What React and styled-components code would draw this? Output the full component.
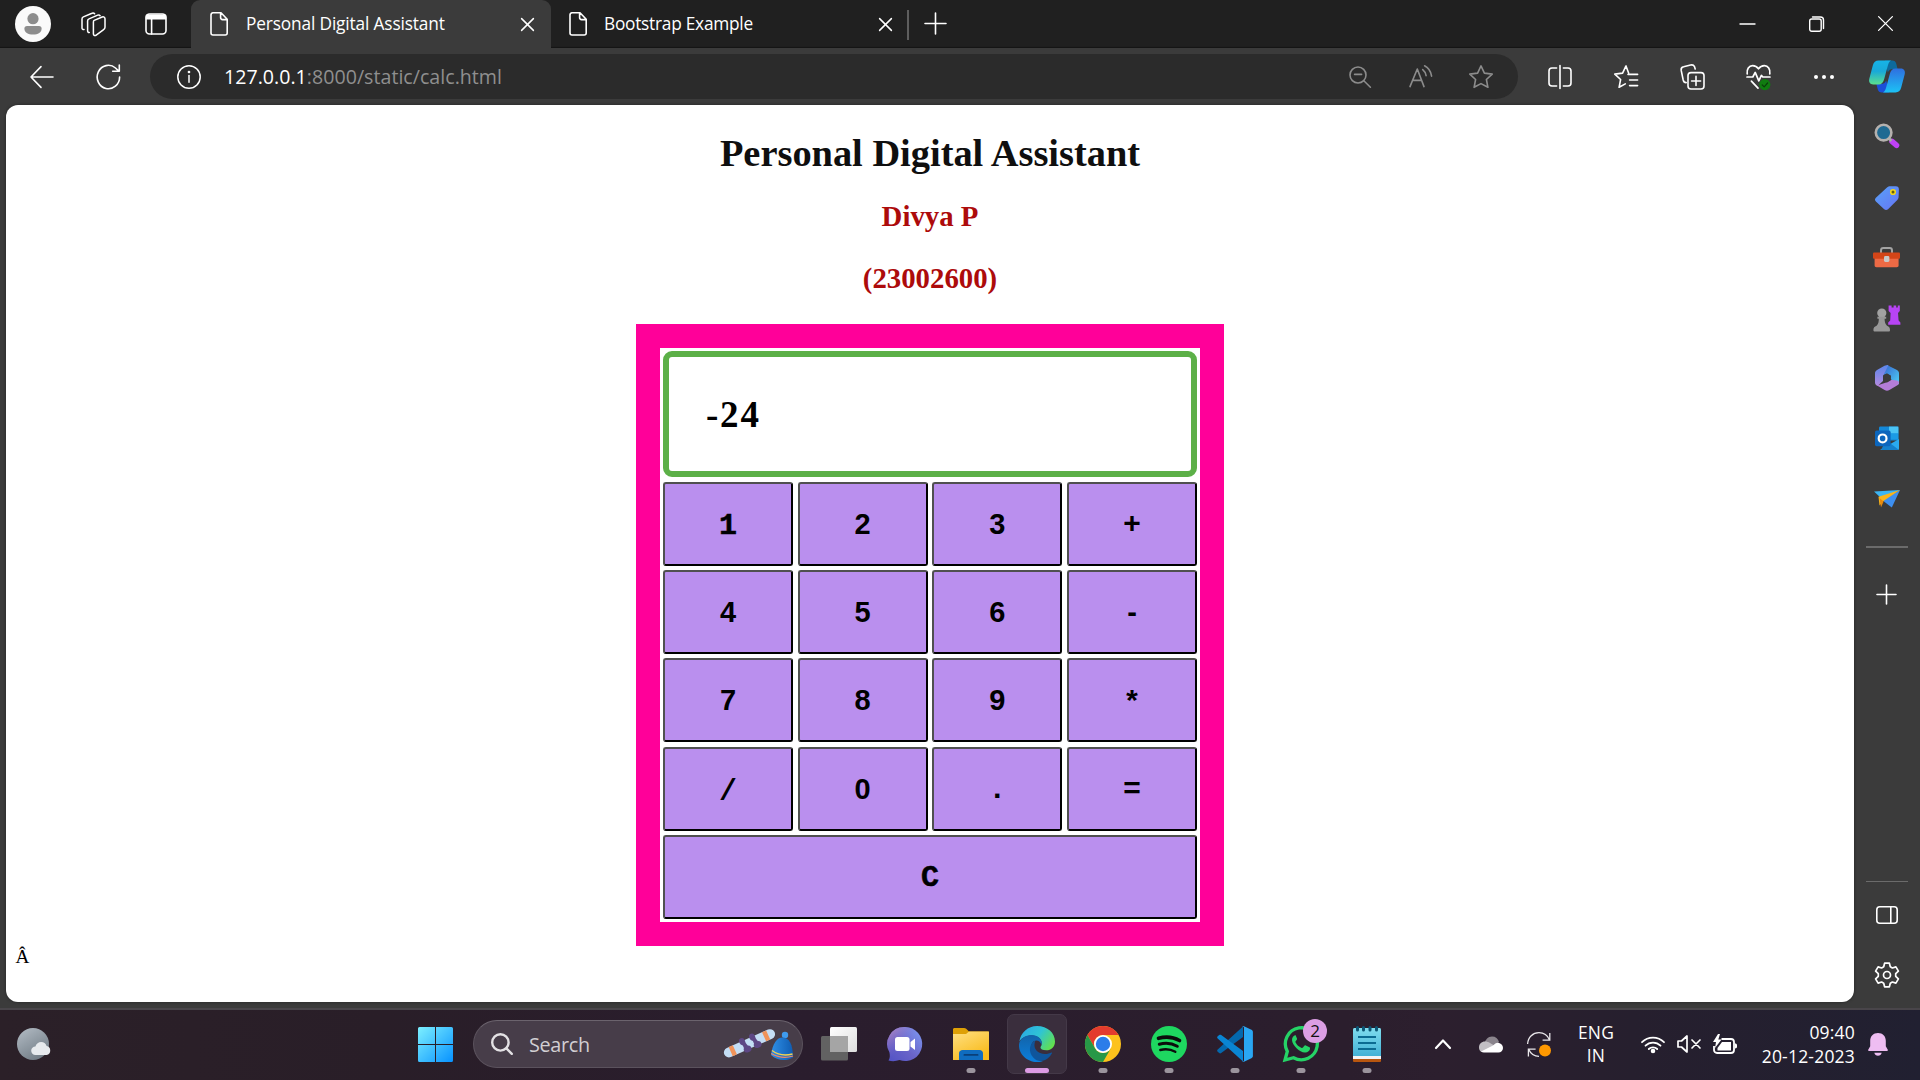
import React, { useState } from "react";
import styled, { createGlobalStyle } from "styled-components";

const UI = '"Open Sans", "Noto Sans", sans-serif';

const Global = createGlobalStyle`
  * { box-sizing: border-box; }
  html, body, #root { height: 100%; }
  body { margin: 0; overflow: hidden; background: #3b3b3b; }
  svg { display: block; flex: none; overflow: visible; }
`;

/* ---------- window ---------- */
const Screen = styled.div`
  width: 1920px; height: 1080px; display: flex; flex-direction: column;
  font-family: ${UI}; color: #fff; background: #3b3b3b; overflow: hidden;
`;
const TitleBar = styled.header`
  height: 48px; flex: none; display: flex; background: #202020;
  box-shadow: inset 0 -2px 1px -1px #151515;
`;
const Slot = styled.div`
  width: ${p => p.$w}px; height: ${p => p.$h ? p.$h + "px" : "100%"}; flex: none;
  display: flex; align-items: center; justify-content: center;
`;
const Tab = styled.div`
  width: ${p => p.$w}px; flex: none; height: 48px; display: flex; align-items: center;
  padding: 0 ${p => p.$active ? 17 : 15}px 0 ${p => p.$active ? 19 : 18}px;
  background: ${p => p.$active ? "#3b3b3b" : "transparent"};
  border-radius: 9px 9px 0 0; font-size: 17.3px;
`;
const TabTitle = styled.span`
  flex: 1; margin-left: ${p => p.$gap}px; white-space: nowrap; line-height: 24px;
  letter-spacing: ${p => p.$ls}px;
`;
const TabDivider = styled.div`width: 2px; height: 30px; margin-top: 10px; background: #5e5e5e;`;
const Grow = styled.div`flex: 1;`;

const Toolbar = styled.div`height: 57px; flex: none; display: flex; align-items: center; padding-left: 9px;`;
const AddressBar = styled.div`
  width: 1368px; height: 45px; margin-left: 9px; border-radius: 23px; background: #2b2b2b;
  display: flex; align-items: center; padding-left: 27px; padding-right: 8px; flex: none;
`;
const Url = styled.div`
  flex: 1; margin-left: 23px; font-size: 19.6px; line-height: 28px; color: #8f8f8f; letter-spacing: 0.02px;
  b { font-weight: 400; color: #fff; }
`;

const Body = styled.div`flex: 1; display: flex; min-height: 0;`;
const Page = styled.main`
  width: 1848px; height: 897px; margin-left: 6px; background: #fff; border-radius: 12px; flex: none;
  font-family: "Liberation Serif", "Times New Roman", serif; color: #000;
  display: flex; flex-direction: column; align-items: center; box-shadow: 0 0 3px #222;
`;
const Heading = styled.h1`margin: 26px 0 0; font-size: 38.4px; line-height: 44px; color: #0f0f0f;`;
const SubHeading = styled.h2`margin: ${p => p.$top}px 0 0; font-size: 28.8px; line-height: 33px; color: #ad0b0b;`;
const Calculator = styled.section`
  width: 588px; height: 622px; margin-top: 29px; flex: none; padding: 24px; background: #ff0099;
`;
const Panel = styled.div`height: 574px; padding: 3px; background: #fff; display: flex; flex-direction: column;`;
const Display = styled.output`
  height: 126px; flex: none; border: 6px solid #5cb047; border-radius: 9px; padding: 1px 0 0 37px;
  display: flex; align-items: center; font-size: 37px; font-weight: 700; letter-spacing: 1.8px;
`;
const Keys = styled.div`
  margin-top: 5px; display: grid; grid-template-columns: repeat(4, 130px); justify-content: space-between;
  grid-auto-rows: 84px; row-gap: 4.2px;
`;
const Key = styled.button`
  border: 2px solid; border-color: #505050 #000 #000 #505050; border-radius: 3px; background: #ba8fee;
  grid-column: ${p => p.$wide ? "1 / -1" : "auto"}; padding: ${p => p.$drop}px 0 0; color: #000;
  font: 700 ${p => p.$sans ? 29 : 30}px/34px ${p => p.$sans ? '"Liberation Sans", sans-serif' : '"Liberation Mono", monospace'};
  -webkit-text-stroke: ${p => p.$heavy ? 0.5 : 0}px #000;
`;
const Stray = styled.div`align-self: flex-start; margin: 0 0 0 9.6px; font-size: 19.2px; line-height: 22px;`;

const Sidebar = styled.aside`
  flex: 1; display: flex; flex-direction: column; align-items: center; padding-right: 1px;
`;
const Rule = styled.div`width: 42px; height: ${p => p.$h}px; margin: ${p => p.$m}; background: #6b6b6b; flex: none;`;

/* ---------- taskbar ---------- */
const Taskbar = styled.footer`
  height: 72px; flex: none; border-top: 2px solid #49454a; display: flex; align-items: center; padding-bottom: 2px;
  background: linear-gradient(90deg, #2b2028 0%, #291e28 20%, #2a1d2d 40%, #2b1e2d 70%, #2c1f2e 75%, #261f2e 85%, #212031 100%);
`;
const SearchBox = styled.div`
  width: 330px; height: 48px; flex: none; border-radius: 24px; background: #473d49; border: 1.5px solid #5b525d;
  border-top-color: #6b636d; display: flex; align-items: center; padding: 0 7px 0 17px; color: #d2cfd3;
  font-size: 19.8px; margin: 0 3px 0 5px;
`;
const SearchLabel = styled.span`flex: 1; margin-left: 16px; letter-spacing: -0.3px;`;
const AppButton = styled.div`
  width: 66px; height: 68px; flex: none; position: relative; display: flex; align-items: center; justify-content: center;
`;
const Tile = styled.div`
  width: 60px; height: 60px; border-radius: 7px; display: flex; align-items: center; justify-content: center;
  background: ${p => p.$on ? "#3a2e3d" : "transparent"}; border: 1.5px solid ${p => p.$on ? "#443948" : "transparent"};
`;
const Indicator = styled.i`
  position: absolute; bottom: 5px; left: 50%; transform: translateX(-50%);
  width: ${p => p.$on ? 24 : 9}px; height: 5px; border-radius: 3px; background: ${p => p.$on ? "#dc9be4" : "#9b949d"};
`;
const Badge = styled.span`
  position: absolute; left: 35px; top: 9px; width: 24px; height: 24px; border-radius: 50%; background: #dc9fe4;
  color: #111; font-size: 17px; line-height: 24px; text-align: center;
`;
const TrayText = styled.div`
  width: ${p => p.$w}px; flex: none; font-size: ${p => p.$size || 17.4}px; line-height: ${p => p.$lh || 24}px; white-space: nowrap;
  text-align: ${p => p.$align}; letter-spacing: ${p => p.$ls || 0}px;
`;

/* ---------- line icons ---------- */
const Line = ({ w = 24, h = 24, c = "#fff", s = 1.6, children }) => (
  <svg width={w} height={h} viewBox={`0 0 ${w} ${h}`} fill="none" stroke={c} strokeWidth={s}
    strokeLinecap="round" strokeLinejoin="round">{children}</svg>
);
const Cross = ({ z = 13, s = 1.5 }) => <Line w={z} h={z} s={s}><path d={`M.6 .6L${z - .6} ${z - .6}M${z - .6} .6L.6 ${z - .6}`} /></Line>;
const DocIcon = () => <Line w={18} h={24}><path d="M3 .8h8l6.2 6.4V21a2 2 0 0 1-2 2H3a2 2 0 0 1-2-2V3a2.2 2.2 0 0 1 2-2.2zM10.6 1v4.6a2 2 0 0 0 2 2H17" /></Line>;
const Plus = ({ z = 21, s = 1.6 }) => <Line w={z} h={z} s={s}><path d={`M${z / 2} 0V${z}M0 ${z / 2}H${z}`} /></Line>;
const StarPath = "M12 .9l3.4 7.2 7.8 1-5.8 5.4 1.5 7.8L12 18.6 5.1 22.3l1.5-7.8L.8 9.1l7.8-1z";

const ProfileIcon = () => (
  <svg width="36" height="36" viewBox="0 0 36 36"><circle cx="18" cy="18" r="18" fill="#fafafa" />
    <circle cx="18" cy="12.7" r="5.6" fill="#8d8d8d" /><path d="M12 20h12a2.6 2.6 0 0 1 2.6 2.6c0 4-3.6 6-8.6 6s-8.6-2-8.6-6A2.6 2.6 0 0 1 12 20z" fill="#8d8d8d" /></svg>
);
const Workspaces = () => (
  <Line w={25} h={25} s={1.5}>
    <path d="M13.2 8.4l8-3.4c1.4-.6 2.8.2 2.8 1.7v8.5c0 1.2-.6 2-1.7 2.7l-7.1 5.3c-1.2.9-2.8.2-2.8-1.3V10c0-.8.2-1.3.8-1.6z" />
    <path d="M8.3 20.4c-1 .2-1.7-.5-1.7-1.6V9c0-1 .4-1.7 1.4-2.1l8.7-3.8c1.1-.4 1.9-.1 2.4.6M3 17.6c-1.2.1-2-.6-2-1.7V7c0-1 .5-1.7 1.4-2.1L11 1.3c1.1-.5 2.1-.2 2.6.5" />
  </Line>
);
const TabActions = () => (
  <Line w={22} h={22}><rect x="1" y="1" width="20" height="20" rx="3.5" /><path d="M1.5 2.2h19v3.6h-19z" fill="#fff" /><path d="M6.6 6v15" /></Line>
);
const Back = () => <Line><path d="M23 12H1M11 1.6L1 12l10 10.4" /></Line>;
const Refresh = () => <Line w={25} h={26}><path d="M23.6 13A11.2 11.7 0 1 1 19.5 4l3 2.8M23.3 1v6.3h-6.6" /></Line>;
const Info = () => <Line s={1.5}><circle cx="12" cy="12" r="11.2" /><path d="M12 10.6v6.6" /><circle cx="12" cy="7" r=".6" fill="#fff" /></Line>;
const ZoomOut = () => <Line w={22} h={22} c="#8c8c8c"><circle cx="9" cy="9" r="8" /><path d="M5.6 8.4h7M14.8 14.8l6.6 6.4" /></Line>;
const ReadAloud = () => <Line c="#8c8c8c"><path d="M1 21.6L8.3 4l6.7 17.6M3.6 15.4h9M13.7 4.6c2 1.6 3 3.4 3.4 6M15.6.8c3.8 2 6.4 6 7 10.4" /></Line>;
const Star = () => <Line c="#8c8c8c"><path d={StarPath} /></Line>;
const Split = () => <Line><path d="M12 .5v23M8.6 3H4a3 3 0 0 0-3 3v12a3 3 0 0 0 3 3h4.6M15.4 3H20a3 3 0 0 1 3 3v12a3 3 0 0 1-3 3h-4.6" /></Line>;
const Favorites = () => <Line><path d="M14.6 8.1L12 .9 8.6 8.1l-7.8 1 5.8 5.4-1.5 7.8 6.2-3.4M14 9.4h9.6M15.6 15h8M15.6 20.6h8" /></Line>;
const Collections = () => (
  <Line w={25} h={26}><rect x="8" y="8.6" width="16" height="16.4" rx="3" /><path d="M16 12.4v9M11.6 17h9M6.2 18.6C4 18.7 3.6 17.6 3.2 16L1.2 6.4C.8 4.2 1.8 3.2 3.6 2.8l7-1.8c2-.5 3.2.2 3.9 1.6l.7 2.4" /></Line>
);
const Health = () => (
  <svg width="25" height="26" viewBox="0 0 25 26" fill="none" stroke="#fff" strokeWidth="1.7" strokeLinecap="round" strokeLinejoin="round">
    <path d="M1.2 9.8C.5 5.4 3 1.6 6.6 1.6c2.4 0 4.4 1 5.9 3.2C14 2.6 16 1.6 18.4 1.6c3.6 0 6.1 3.8 5.4 8.2M1 13h5.8l2.4-4.6 3.6 8.4 2.6-5.4 1.4 1.6H24M5.4 17.2l6.6 7" />
    <circle cx="18.8" cy="20.6" r="5.6" fill="#107c10" stroke="none" /><path d="M16.2 20.8l2 2 3.4-3.8" stroke="#0a3d0a" strokeWidth="1.2" />
  </svg>
);
const Dots = () => <svg width="20" height="4" viewBox="0 0 20 4" fill="#fff"><circle cx="2" cy="2" r="2" /><circle cx="10" cy="2" r="2" /><circle cx="18" cy="2" r="2" /></svg>;
const Copilot = () => (
  <svg width="36" height="33" viewBox="0 0 36 33">
    <defs>
      <linearGradient id="cpA" x1="0" y1="0" x2="0" y2="1"><stop offset="0" stopColor="#16b4e8" /><stop offset=".45" stopColor="#19a9d8" /><stop offset="1" stopColor="#5ce08d" /></linearGradient>
      <linearGradient id="cpB" x1="0" y1="0" x2="0" y2="1"><stop offset="0" stopColor="#2f6fe0" /><stop offset="1" stopColor="#1cc2f5" /></linearGradient>
    </defs>
    <path d="M16 .5h7c2.500 0 3.600 1.200 4.200 3L28.600 9h-4c-3 0-5 1-5.800 3.500z" fill="#0d6a9c" />
    <path d="M20 32.500h-7c-2.500 0-3.600-1.200-4.200-3L7.400 24h4c3 0 5-1 5.800-3.500z" fill="#1b50d8" />
    <path d="M9.500.5H22c-2 1-2.600 3-3.400 6l-3.400 12.500c-.9 3.500-2.500 5.500-5.800 5.500H4.200C1 24.500-.5 22 .3 18.800L3.800 5.400C4.700 2 6.500.5 9.500.5z" fill="url(#cpA)" />
    <path d="M26.500 32.500H14c2-1 2.600-3 3.400-6L20.800 14c.9-3.500 2.500-5.500 5.800-5.500h5.200c3.200 0 4.700 2.500 3.900 5.700l-3.500 13.400c-.9 3.400-2.700 4.900-5.700 4.900z" fill="url(#cpB)" />
  </svg>
);

/* ---------- sidebar icons ---------- */
const SideSearch = () => (
  <svg width="26" height="26" viewBox="0 0 26 26"><path d="M18 18.4l4.600 4" stroke="#bf42f5" strokeWidth="5.4" strokeLinecap="round" /><path d="M14.4 15l3 2.8" stroke="#a9a9a9" strokeWidth="3" />
    <circle cx="9.6" cy="9.6" r="7.8" fill="#1f6a92" stroke="#b5b1ae" strokeWidth="2.6" /></svg>
);
const Tag = () => (
  <svg width="24" height="24" viewBox="0 0 24 24"><defs><linearGradient id="tg" x1="0" y1="0" x2="1" y2="1"><stop offset="0" stopColor="#58a2f8" /><stop offset="1" stopColor="#6674f4" /></linearGradient></defs>
    <path d="M15.5.3h5.200c2.200 0 3.300 1.200 3.200 3.300l-.3 7.200c0 1.400-.5 2.300-1.300 3.100L13 23.200c-1.200 1.100-2.600 1.100-3.800 0L.9 15.400c-1.200-1.200-1.200-2.500 0-3.700L12 1.500C13 .6 14 .3 15.500.3z" fill="url(#tg)" /><circle cx="18" cy="6" r="2.3" fill="#66600a" stroke="#f2d51b" strokeWidth="1.6" /></svg>
);
const Briefcase = () => (
  <svg width="27" height="21" viewBox="0 0 27 21"><path d="M8 6V3.4C8 2 9 1 10.4 1h6.4C18 1 19 2 19 3.400V6" fill="none" stroke="#a3a3a3" strokeWidth="2" />
    <path d="M1.6 9h24v9.6c0 1-.8 1.6-1.8 1.6H3.4c-1 0-1.8-.6-1.8-1.6z" fill="#ed6a45" /><rect y="5.4" width="27" height="6.4" rx="1" fill="#d34518" /><rect x="11" y="9" width="5.4" height="6" rx="1.4" fill="#c9c9c9" /></svg>
);
const Chess = () => (
  <svg width="27" height="27" viewBox="0 0 27 27">
    <path d="M15.6.4h3v2h2v-2h2.6v2h1.600v-2h2V6l-1.800 2 .6 7.600 1.800 2v2.200H15.200v-2.200l2-2 .4-7.600-2-2z" fill="#b744f4" />
    <circle cx="8.8" cy="8" r="4.6" fill="#a2a2a2" /><path d="M4.4 11.8h8.800v2h-1.600c0 3 .6 5 2.400 7 2 .8 3 2 3 4.200 0 1-.4 1.600-1.400 1.600H2c-1 0-1.600-.6-1.600-1.600 0-2.200 1-3.400 3.200-4.200 1.800-2 2.200-4 2.200-7H4.400z" fill="#989898" /></svg>
);
const M365 = () => (
  <svg width="24" height="26" viewBox="0 0 24 26">
    <defs><linearGradient id="mb" x1="0" y1="0" x2="1" y2="1"><stop offset="0" stopColor="#3563cf" /><stop offset="1" stopColor="#4fd0f5" /></linearGradient>
      <linearGradient id="ml" x1="0" y1="0" x2="0" y2="1"><stop offset="0" stopColor="#5b86ea" /><stop offset="1" stopColor="#b48be0" /></linearGradient></defs>
    <path d="M12 0L22 5.1c1.300.8 2 1.900 2 3.300v11L15.500 14l.3-3.200L12 8.600 8 10z" fill="url(#mb)" />
    <path d="M13.500 0L8.800 9.500 8 11v5l-5.500 5C.8 20 0 19 0 17.400V8.400C0 7 .7 5.900 2 5.100L9.500.8C10.800.1 12 0 13.500 0z" fill="url(#ml)" />
    <path d="M24 17.400c0 1.400-.7 2.400-2 3.200l-7.600 4.500c-1.600.9-3.200.9-4.800 0L2 20.600l10-3.400 3.800-2.400L22 15.500c1.300.3 2 .9 2 1.900z" fill="#b47dd8" />
    <path d="M12 8.600l3.900 2.200v4.400L12 17.400l-3.900-2.200v-4.400z" fill="#3b3b3b" /></svg>
);
const Outlook = () => (
  <svg width="24" height="24" viewBox="0 0 24 24"><rect x="4" y=".6" width="19.4" height="14" rx="1.4" fill="#1488d8" /><rect x="14" y=".6" width="9.4" height="7" fill="#4bc4f5" /><rect x="14" y="7.4" width="9.4" height="6" fill="#1b9be6" />
    <path d="M5 24l19-11v9.4c0 1-.6 1.6-1.6 1.6z" fill="#2aaaf0" /><path d="M11 14l13 10H6z" fill="#1480cc" /><rect y="4.6" width="15.6" height="15.6" rx="1.6" fill="#0c66bd" /><circle cx="7.6" cy="12.4" r="3.9" fill="none" stroke="#fff" strokeWidth="2.2" /></svg>
);
const Send = () => (
  <svg width="26" height="18" viewBox="0 0 26 18"><path d="M0 1.4L26 0 8 9z" fill="#3cb5f4" /><path d="M26 0l-8.2 17.600L8 10z" fill="#3d8ff0" /><path d="M26 0L4.500 6.800l1 8.800L9.400 11z" fill="#fab41a" /><path d="M5.500 8l1.500 9.400 2.600-5.800" fill="#e8890c" /></svg>
);
const PanelIcon = () => <Line w={22} h={18} s={1.6}><rect x=".8" y=".8" width="20.4" height="16.4" rx="3" /><path d="M14.8 1v16" /></Line>;
const Gear = () => (
  <Line w={24} h={26} s={1.7}><circle cx="12" cy="13" r="3.5" />
    <path d="M9.6 1.2h4.800l.9 3.600 2.100 1.200 3.500-1.100 2.500 4.200-2.700 2.600v2.600l2.700 2.600-2.500 4.200-3.500-1.100-2.100 1.200-.9 3.600H9.600l-.9-3.600L6.600 20l-3.500 1.100-2.500-4.200 2.700-2.600v-2.600L.6 9.100l2.500-4.200L6.600 6l2.100-1.200z" /></Line>
);

/* ---------- taskbar icons ---------- */
const Weather = () => (
  <svg width="34" height="32" viewBox="0 0 34 32"><defs><linearGradient id="mn" x1="0" y1="0" x2=".6" y2="1"><stop offset="0" stopColor="#b4bdc6" /><stop offset="1" stopColor="#737e87" /></linearGradient></defs>
    <circle cx="16" cy="16" r="16" fill="url(#mn)" /><path d="M18.4 27a4.2 4.2 0 0 1 0-8.4c1-3 3-4.6 5.800-4.600 2.600 0 4.600 1.600 5.400 4A4.600 4.600 0 0 1 29.600 27z" fill="#e7eaed" /></svg>
);
const StartIcon = () => (
  <svg width="35" height="35" viewBox="0 0 35 35"><defs><linearGradient id="wn" gradientUnits="userSpaceOnUse" x1="0" y1="0" x2="35" y2="35"><stop offset="0" stopColor="#7df0ff" /><stop offset="1" stopColor="#0792ff" /></linearGradient></defs>
    <path fill="url(#wn)" d="M1.500 0H17v17H0V1.500A1.500 1.500 0 0 1 1.500 0zM18 0h15.500A1.500 1.500 0 0 1 35 1.500V17H18zM0 18h17v17H1.500A1.500 1.500 0 0 1 0 33.500zM18 18h17v15.500a1.500 1.500 0 0 1-1.500 1.500H18z" /></svg>
);
const Magnifier = () => <Line w={22} h={22} c="#e3e1e4" s={2.4}><circle cx="9.4" cy="9.4" r="8.2" /><path d="M15.4 15.4l5.400 5.400" /></Line>;
const WinterArt = () => (
  <svg width="72" height="34" viewBox="0 0 72 34">
    <defs><linearGradient id="ht" x1="0" y1="0" x2="1" y2="0"><stop offset="0" stopColor="#2f8fe6" /><stop offset="1" stopColor="#0f5cb2" /></linearGradient></defs>
    <g transform="rotate(-24 26 16.5)">
      <rect x="-1" y="11.500" width="55" height="10" rx="5" fill="#c4def5" />
      <path d="M6 11.500h4.500v10H6zM42.500 11.500H47v10h-4.500z" fill="#f0935a" />
      <g fill="#5d4785"><ellipse cx="20.500" cy="12" rx="3" ry="3.600" /><ellipse cx="22.500" cy="21" rx="4" ry="3.200" /><path d="M19.500 12h3l2 8h-5z" />
        <ellipse cx="31.500" cy="12" rx="3" ry="3.600" /><ellipse cx="33.500" cy="21" rx="4" ry="3.200" /><path d="M30.500 12h3l2 8h-5z" /></g>
    </g>
    <circle cx="62" cy="8" r="3.200" fill="#3f9bee" /><path d="M48 28c1.500-11.500 6-17.500 11.500-17.500C66 10.500 70 17 70 30.500c-6 4-16 3.500-22-2.500z" fill="url(#ht)" />
    <path d="M49 23.500c6 4.500 13 5.500 20.500 3.500" fill="none" stroke="#f6d24e" strokeWidth="1.3" /><path d="M48.300 26.500c7 4 14 5 21.700 2.500" fill="none" stroke="#f08a6a" strokeWidth="1.3" />
  </svg>
);
const TaskView = () => (
  <svg width="36" height="34" viewBox="0 0 36 34"><defs><linearGradient id="tv" x1="0" y1="0" x2="1" y2="1"><stop offset="0" stopColor="#fff" /><stop offset="1" stopColor="#dedede" /></linearGradient></defs>
    <rect y="9" width="27" height="24.500" rx="1.500" fill="#626262" /><rect x="9" width="27" height="25" rx="1.500" fill="url(#tv)" /><path d="M9 9h18v16H9z" fill="#a5a5a5" /></svg>
);
const Chat = () => (
  <svg width="34" height="34" viewBox="0 0 34 34"><defs><linearGradient id="ct" x1="0" y1="1" x2="1" y2="0"><stop offset="0" stopColor="#5152c4" /><stop offset=".45" stopColor="#6a64c9" /><stop offset="1" stopColor="#7e9df5" /></linearGradient>
    <linearGradient id="ct2" x1="0" y1="0" x2="1" y2="1"><stop offset="0" stopColor="#c48fc0" /><stop offset=".5" stopColor="#7767c6" stopOpacity="0" /></linearGradient></defs>
    <path d="M17 0a17 17 0 1 1-5.500 33C8 34.300 4 34.500.500 33.500c1.700-3 1.500-4.500 1-8A17 17 0 0 1 17 0z" fill="url(#ct)" /><path d="M17 0a17 17 0 1 1-5.500 33C8 34.300 4 34.500.500 33.500c1.700-3 1.500-4.500 1-8A17 17 0 0 1 17 0z" fill="url(#ct2)" />
    <rect x="7" y="10" width="14.500" height="14" rx="2.500" fill="#fff" /><path d="M22.500 15l4.500-3.500V23l-4.500-3.500z" fill="#fff" /></svg>
);
const Folder = () => (
  <svg width="36" height="33" viewBox="0 0 36 33"><defs><linearGradient id="fd" x1="0" y1="0" x2=".6" y2="1"><stop offset="0" stopColor="#ffe083" /><stop offset="1" stopColor="#f9bb1b" /></linearGradient></defs>
    <path d="M0 1.500C0 .6.600 0 1.500 0H11c1 0 1.600.2 2.200.8L16 3.500h18.500c.9 0 1.500.6 1.500 1.500v4H0z" fill="#dea006" /><path d="M0 6h13l3-2.500h20V32H0z" fill="url(#fd)" />
    <path d="M6 32v-6.500C6 23.500 7.500 22 9.500 22h17c2 0 3.500 1.500 3.500 3.500V32z" fill="#0f6cbf" /><rect x="10.500" y="26" width="15" height="1.800" rx=".9" fill="#0a3f78" /></svg>
);
const Edge = () => (
  <svg width="36" height="36" viewBox="0 0 36 36"><defs>
    <linearGradient id="eg" x1="0" y1=".2" x2="1" y2=".7"><stop offset="0" stopColor="#2aa8e6" /><stop offset=".5" stopColor="#2fc4d4" /><stop offset="1" stopColor="#63e04b" /></linearGradient>
    <linearGradient id="eb" x1="0" y1="0" x2="0" y2="1"><stop offset="0" stopColor="#1263a9" /><stop offset="1" stopColor="#0b7fdc" /></linearGradient></defs>
    <path d="M.4 15.500C1.600 6.500 9 0 18 0c10.500 0 18 7 18 15.500 0 5.500-4 8.800-8.600 8.800-4 0-5.900-1.300-5.900-2.700 0-1 1.300-1.700 1.300-4.300C22.800 13.500 19 9.500 13 9.500 7 9.500 2.500 12 .4 15.500z" fill="url(#eg)" />
    <path d="M0 18.500C.6 13 6 9 12.500 9c6.400 0 10.300 4 10.300 8 0 .6 0 1.200-.2 1.800-1-2.800-3-4.300-5.200-4.300-3 0-5.400 2.800-5.400 7 0 7 6 13.500 12 13.600C21 36.300 19.500 36 18 36 8 36-.5 28 0 18.500z" fill="url(#eb)" />
    <path d="M16.500 14.500c-6.500 3-7.500 11.500-2 17.200 5 5.300 13.200 4 18.200-4 .6-.8.200-1.400-.7-1-8.500 3.800-16.500-1-16.500-7.200 0-2 .400-3.700 1-5z" fill="#0f559c" /></svg>
);
const Chrome = () => (
  <svg width="36" height="36" viewBox="0 0 36 36"><circle cx="18" cy="18" r="18" fill="#fdc21c" />
    <path d="M2.400 9A18 18 0 0 1 33.600 9H18a9 9 0 0 0-7.800 13.500z" fill="#e33b2e" /><path d="M2.400 9a18 18 0 0 0 15.600 27l7.800-13.500a9 9 0 0 1-15.600 0z" fill="#279847" />
    <circle cx="18" cy="18" r="9" fill="#fff" /><circle cx="18" cy="18" r="7.200" fill="#2b7de9" /></svg>
);
const Spotify = () => (
  <svg width="36" height="36" viewBox="0 0 36 36"><circle cx="18" cy="18" r="18" fill="#1ed760" /><g fill="none" stroke="#0c0c0c" strokeLinecap="round">
    <path d="M7.500 12.300c7-2 15-1.200 21 2.200" strokeWidth="3.600" /><path d="M8.300 18.300c6-1.700 12.700-1 18 2" strokeWidth="3" /><path d="M9.300 24c5-1.400 10.500-.8 15 1.800" strokeWidth="2.400" /></g></svg>
);
const VSCode = () => (
  <svg width="36" height="36" viewBox="0 0 36 36"><path d="M.7 23.500L26 .500V11L4.200 27c-.7.500-1.500.5-2 0L.7 25.700c-.7-.6-.7-1.600 0-2.200z" fill="#0468ad" />
    <path d="M.7 12.500L26 35.500V25L4.200 9c-.7-.5-1.500-.5-2 0L.7 10.300c-.7.6-.7 1.600 0 2.200z" fill="#0a85d3" /><path d="M27 35.800c-.8.300-1.700.1-2.300-.5.800.7 2.300.2 2.300-1V1.700C27 .500 25.500 0 24.700.700c.600-.6 1.500-.8 2.300-.5l7.400 3.600c.9.400 1.500 1.200 1.500 2.200v24c0 1-.6 1.800-1.500 2.200z" fill="#2aa7f3" /></svg>
);
const WhatsApp = () => (
  <svg width="36" height="36" viewBox="0 0 36 36"><path d="M2 34l2.300-8.600A16 16 0 1 1 10.500 31.700z" fill="none" stroke="#25d366" strokeWidth="3.3" />
    <path d="M11.800 9.500c-.8 0-3 1.600-2.800 4.700.3 5 8.200 12.800 13.200 12.300 2.700-.3 4.600-1.700 4.800-3.800.1-.9-.2-1.200-1-1.600l-3.200-1.600c-.8-.3-1.200-.1-1.600.4l-1.300 1.700c-.4.500-.8.500-1.300.3-3-1.500-4.600-3-6-5.500-.3-.5-.2-.9.200-1.300l1-1.300c.3-.4.300-.8.200-1.200l-1.300-3c-.3-.6-.6-.7-.9-.1z" fill="#25d366" /></svg>
);
const Notepad = () => (
  <svg width="28" height="36" viewBox="0 0 28 36"><rect y="30" width="28" height="6" rx="1" fill="#b8560f" /><rect y="28" width="28" height="5" fill="#f2f4f5" /><defs><linearGradient id="np" x1="0" y1="0" x2="0" y2="1"><stop offset="0" stopColor="#7fdcee" /><stop offset="1" stopColor="#43b2d6" /></linearGradient></defs>
    <path d="M0 3.500C0 2.600.600 2 1.500 2h25c.9 0 1.500.6 1.500 1.500V30H0z" fill="url(#np)" /><path d="M4.500 1.500v2.500M10.500 1.500v2.500M17 1.500v2.500M23.500 1.500v2.500" stroke="#0b5675" strokeWidth="3" strokeLinecap="round" />
    <path d="M5 11h18M5 17h18M5 23h18" stroke="#0b6b92" strokeWidth="2" /></svg>
);
const Chevron = () => <Line w={16} h={10} s={2.2}><path d="M1 9l7-7.500L15 9" /></Line>;
const OneDrive = () => (
  <svg width="24" height="17" viewBox="0 0 24 17"><path d="M5 9C6 3.500 9 .5 13 .5c3.600 0 6 2 7 5.500l-6 4z" fill="#8a848c" /><path d="M0 11.500C0 8 2.500 5.500 6 5.500c2 0 3.500.5 5 1.500l5 3-13.500 6C1 15.200 0 13.500 0 11.500z" fill="#c2bfc4" /><path d="M2 15.500L14 9.500c2-2 4-3.300 6-2.500 2.400.6 4 2.400 4 5 0 2.700-2 4.500-4.600 4.500H5c-1.200 0-2.200-.3-3-1z" fill="#fff" /></svg>
);
const Sync = () => (
  <svg width="24" height="25" viewBox="0 0 24 25" fill="none" stroke="#e9e7ea" strokeWidth="1.3"><path d="M.6 12C1 5 6 .7 12 .7c5 0 8.500 2.500 10.600 7.300M22.800 1v7.200h-7.200M1.400 24.500v-7.300h7.200M1.800 17.500c2 4.500 5.500 6.800 10.200 6.800" /><circle cx="18" cy="18.500" r="6" fill="#ff9800" stroke="none" /></svg>
);
const Wifi = () => <Line w={24} h={18} s={1.8}><path d="M1 7.200a15.500 15.500 0 0 1 22 0M4.500 10.700a10.600 10.600 0 0 1 15 0M7.800 14a6 6 0 0 1 8.400 0" /><circle cx="12" cy="16" r="1.4" fill="#fff" /></Line>;
const Mute = () => <Line w={24} h={18} s={1.7}><path d="M1 6h3.500L10 1v16l-5.500-5H1zM15 5l8 8M23 5l-8 8" /></Line>;
const Battery = () => (
  <svg width="24" height="21" viewBox="0 0 24 21"><path d="M8.500 5H18a3 3 0 0 1 3 3v8a3 3 0 0 1-3 3H4a3 3 0 0 1-3-3v-4" fill="none" stroke="#fff" strokeWidth="1.8" /><path d="M9 8h9v8.500H4.500V14z" fill="#fff" /><path d="M22 9.500c1.300 0 2 .6 2 1.700v1.600c0 1-.7 1.700-2 1.700zM5 0L0 8h3l-1 6 6.500-8.500H5.300L7 0z" fill="#fff" /></svg>
);
const Bell = () => (
  <svg width="20" height="23" viewBox="0 0 20 23" fill="#eebdf2"><path d="M10 0c4.700 0 7.800 3.300 7.800 7.800v5.400l2 3.600c.3.600 0 1.200-.8 1.200H1c-.8 0-1.100-.6-.8-1.200l2-3.600V7.800C2.200 3.300 5.300 0 10 0zM6.300 19.800h7.400c-.4 1.800-1.900 3-3.700 3s-3.300-1.200-3.700-3z" /></svg>
);

const KEYS = ["1", "2", "3", "+", "4", "5", "6", "-", "7", "8", "9", "*", "/", "0", ".", "=", "C"];
const DROP = { "*": 8, "/": 6, "1": 3, "C": 3 };
const isSans = k => "234567890-".includes(k);
const SIDE = [SideSearch, Tag, Briefcase, Chess, M365, Outlook, Send];
const APPS = [
  { I: TaskView, idle: true }, { I: Chat, idle: true }, { I: Folder }, { I: Edge, on: true }, { I: Chrome },
  { I: Spotify }, { I: VSCode }, { I: WhatsApp, badge: "2" }, { I: Notepad },
];

export default function App() {
  const [value, setValue] = useState("-24");
  const press = k => {
    if (k === "C") return setValue("");
    if (k !== "=") return setValue(v => v + k);
    const m = value.match(/^(-?[\d.]+)([-+*/])(-?[\d.]+)$/);
    if (!m) return;
    const a = +m[1], b = +m[3];
    setValue(String({ "+": a + b, "-": a - b, "*": a * b, "/": a / b }[m[2]]));
  };
  return (
    <Screen>
      <Global />
      <TitleBar>
        <Slot $w={66}><ProfileIcon /></Slot>
        <Slot $w={54}><Workspaces /></Slot>
        <Slot $w={71}><TabActions /></Slot>
        <Tab $w={360} $active><DocIcon /><TabTitle $gap={18} $ls={-0.15}>Personal Digital Assistant</TabTitle><Cross /></Tab>
        <Tab $w={356}><DocIcon /><TabTitle $gap={17} $ls={-0.25}>Bootstrap Example</TabTitle><Cross /></Tab>
        <TabDivider />
        <Slot $w={52} $h={47}><Plus /></Slot>
        <Grow />
        <Slot $w={68} $h={47}><Line w={15} h={2} s={1.4}><path d="M0 1h15" /></Line></Slot>
        <Slot $w={70} $h={47}><Line w={15} h={16} s={1.4}><rect x=".7" y="3" width="11.5" height="12.3" rx="2" /><path d="M3.500 1h8a3 3 0 0 1 3 3v8.500" /></Line></Slot>
        <Slot $w={69} $h={47}><Cross z={15} s={1.3} /></Slot>
      </TitleBar>
      <Toolbar>
        <Slot $w={66}><Back /></Slot>
        <Slot $w={66}><Refresh /></Slot>
        <AddressBar>
          <Info />
          <Url><b>127.0.0.1</b>:8000/static/calc.html</Url>
          <Slot $w={60}><ZoomOut /></Slot><Slot $w={61}><ReadAloud /></Slot><Slot $w={59}><Star /></Slot>
        </AddressBar>
        <Grow />
        <Slot $w={66}><Split /></Slot><Slot $w={67}><Favorites /></Slot><Slot $w={66}><Collections /></Slot>
        <Slot $w={66}><Health /></Slot><Slot $w={64}><Dots /></Slot><Slot $w={62}><Copilot /></Slot><Slot $w={2.5} />
      </Toolbar>
      <Body>
        <Page>
          <Heading>Personal Digital Assistant</Heading>
          <SubHeading $top={25}>Divya P</SubHeading>
          <SubHeading $top={29}>(23002600)</SubHeading>
          <Calculator>
            <Panel>
              <Display>{value}</Display>
              <Keys>
                {KEYS.map(k => (
                  <Key key={k} $wide={k === "C"} $sans={isSans(k)} $heavy={k === "1" || k === "C"}
                    $drop={DROP[k] ?? (isSans(k) ? 0 : 2)} onClick={() => press(k)}>{k}</Key>
                ))}
              </Keys>
            </Panel>
          </Calculator>
          <Stray>Â</Stray>
        </Page>
        <Sidebar>
          {SIDE.map((I, i) => <Slot key={i} $w={64} $h={i ? 60.2 : 62.6}><I /></Slot>)}
          <Rule $h={2} $m="17px 0" />
          <Slot $w={64} $h={60}><Plus z={19} /></Slot>
          <Grow />
          <Rule $h={1} $m="0 0 3px" />
          <Slot $w={64} $h={60}><PanelIcon /></Slot>
          <Slot $w={64} $h={60}><Gear /></Slot>
          <Slot $w={64} $h={3} />
        </Sidebar>
      </Body>
      <Taskbar>
        <Slot $w={68}><Weather /></Slot>
        <Slot $w={335} />
        <Slot $w={65}><StartIcon /></Slot>
        <SearchBox><Magnifier /><SearchLabel>Search</SearchLabel><WinterArt /></SearchBox>
        {APPS.map(({ I, idle, on, badge }, i) => (
          <AppButton key={i}>
            <Tile $on={on}><I /></Tile>
            {!idle && <Indicator $on={on} />}
            {badge && <Badge>{badge}</Badge>}
          </AppButton>
        ))}
        <Grow />
        <Slot $w={48}><Chevron /></Slot>
        <Slot $w={48}><OneDrive /></Slot>
        <Slot $w={48}><Sync /></Slot>
        <Slot $w={66}><TrayText $w={44} $align="center" $lh={23} $ls={0.2}>ENG<br />IN</TrayText></Slot>
        <Slot $w={48}><Wifi /></Slot>
        <Slot $w={24}><Mute /></Slot>
        <Slot $w={48}><Battery /></Slot>
        <TrayText $w={106} $align="right" $ls={0.2} $size={17.5}>09:40<br />20-12-2023</TrayText>
        <Slot $w={46}><Bell /></Slot>
        <Slot $w={19} />
      </Taskbar>
    </Screen>
  );
}
